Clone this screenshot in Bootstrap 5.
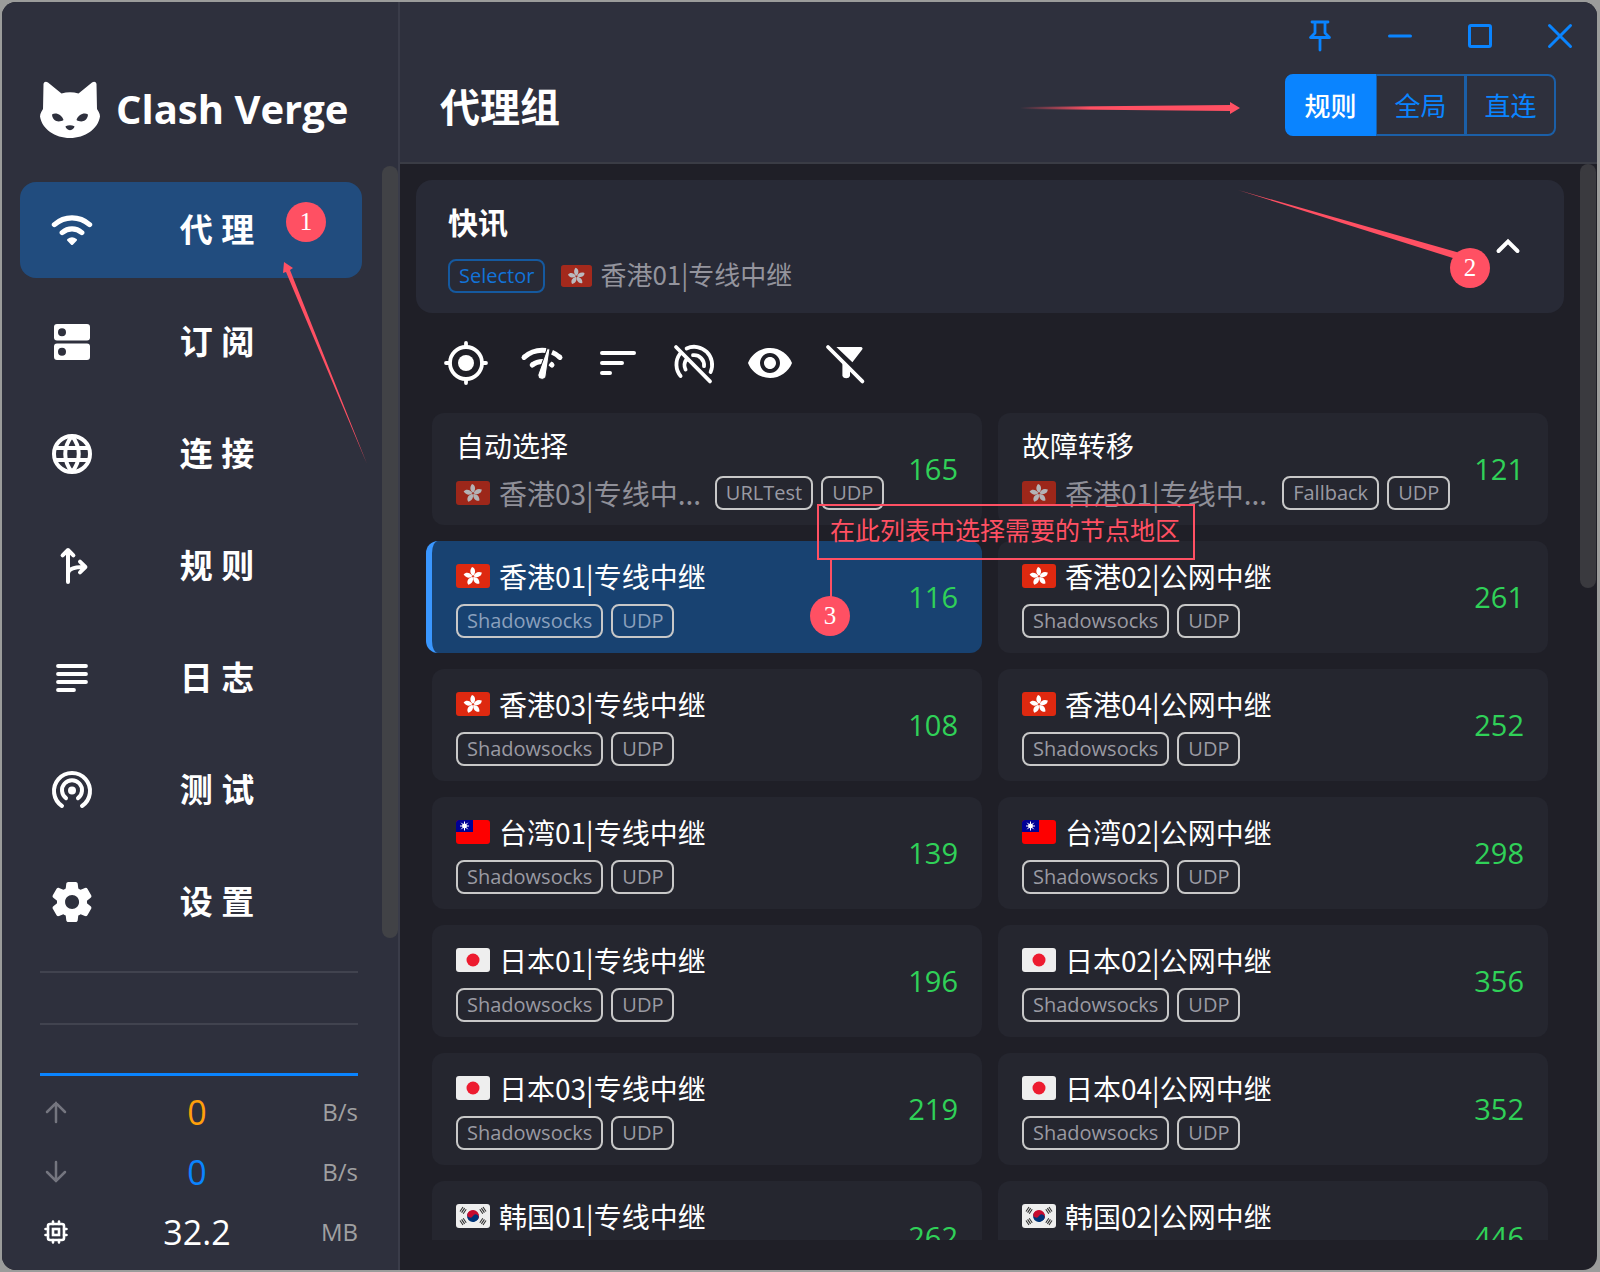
<!DOCTYPE html>
<html lang="zh-CN" data-bs-theme="dark">
<head>
<meta charset="utf-8">
<meta name="viewport" content="width=device-width, initial-scale=1">
<title>Clash Verge</title>
<link href="https://cdn.jsdelivr.net/npm/bootstrap@5.3.0/dist/css/bootstrap.min.css" rel="stylesheet">
<style>
:root{--cv-blue:#0a84ff;--cv-pin:#ff5063;--cv-latin:"Open Sans","Noto Sans CJK SC",sans-serif;--cv-cjk:"Noto Sans CJK SC","Open Sans",sans-serif}
body{background:#9b9c9b;font-family:var(--cv-latin);color:#fff;height:100vh;overflow:hidden}
svg{display:block;flex:none}
.shell{height:calc(100vh - 4px);margin:2px 3px 2px 2px;border-radius:14px;overflow:hidden;background:#1f1f27}
.side{width:398px;background:#2e303d;border-right:2px solid #3a3c49;flex:none}
.brand{height:164px;padding:78px 38px 0;gap:16px}
.brand-name{font-weight:700;font-size:40px;line-height:58px;white-space:nowrap}
.side-nav{gap:16px;padding:16px 36px 0 18px}
.side-nav .nav-link{height:96px;border-radius:16px;color:#fff;padding:0 0 0 28px;font-size:33px;font-weight:700;line-height:48px}
.side-nav .nav-link.active{background:#214c7e}
.side-nav .nav-link span{flex:1;text-align:center;padding-right:24px}
.thumb-side{top:164px;right:0;width:16px;height:772px;border-radius:8px;background:#414246}
.traffic{padding:0 40px 8px 38px}
.rule{height:2px;background:#41434f;margin-bottom:50px}
.graph-line{height:3px;background:var(--cv-blue);margin-top:-2px;margin-bottom:6px}
.stat-row{height:60px}
.stat-row>svg{width:32px}
.stat-val{flex:1;text-align:center;font-size:34px;line-height:44px;padding-left:24px}
.stat-val.up{color:#ff9f0a}.stat-val.down{color:var(--cv-blue)}
.stat-unit{width:60px;text-align:right;font-size:24px;line-height:32px;color:#a0a0a2}
.head{flex:none;height:162px;background:#2e303d;border-bottom:2px solid #3a3c45;padding:2px 41px 0 40px}
.win-btns{gap:32px;margin-right:-28px;margin-bottom:6px}
.win-btns .btn{padding:0;width:48px;height:64px;color:var(--cv-blue);border:0}
.head h1{font-size:40px;line-height:60px;font-weight:700;font-family:var(--cv-cjk)}
.mode .btn{height:62px;width:91px;padding:0;font-size:26px;line-height:36px;color:var(--cv-blue);border:2px solid #1b5fa8;border-radius:8px;font-family:var(--cv-cjk)}
.mode .btn.active{background:var(--cv-blue);border-color:var(--cv-blue);color:#fff;font-weight:500}
.mode .btn+.btn{margin-left:-1px}
.scroll-area{min-height:0;margin-bottom:30px;overflow:hidden}
.group{background:#282a36;border-radius:16px;margin:16px 33px 0 16px;padding:16px 32px 20px;height:133px;color:#fff}
.group h2{font-size:30px;line-height:52px;font-weight:700;font-family:var(--cv-cjk);margin:0 0 10px}
.chip{height:34px;border:2px solid #c8c8c8;border-radius:8px;padding:0 9px;font-size:20px;line-height:29px;color:#9a9aa3;white-space:nowrap}
.chip.sel{border-color:#15599f;color:#1273d8}
.sub{font-family:var(--cv-cjk);color:#94949d;font-size:26px;line-height:34px;padding-bottom:4px}
.tools{padding:26px 42px 26px;gap:28px}
.tools .btn{padding:0;border:0;width:48px;height:48px;color:#fff}
.nodes{display:grid;grid-template-columns:1fr 1fr;gap:16px;padding:0 49px 0 32px}
.node{height:112px;border-radius:12px;background:#25262f;padding:0 24px;min-width:0}
.node.active{background:#184271;border-left:6px solid #3a97ff;margin-left:-6px}
.node.active .chip{color:#8ba0bd}
.nm{font-family:var(--cv-cjk);font-size:28px;line-height:40px;gap:9px;white-space:nowrap}
.nm.grey{color:#8f8f98}
.nm.grey svg{opacity:.65}
.ms{font-size:29px;line-height:40px;color:#30d158;flex:none}
.thumb-main{top:162px;right:1px;width:16px;height:424px;border-radius:8px;background:#3a3a3f}
.notes{inset:0;pointer-events:none}
.pin-no{width:40px;height:40px;border-radius:50%;background:var(--cv-pin);font:25px/40px "Liberation Serif",serif;text-align:center;color:#fff}
.p1{left:286px;top:202px}.p2{left:1450px;top:248px}.p3{left:810px;top:596px}
.note-box{left:817px;top:504px;border:2px solid var(--cv-pin);color:var(--cv-pin);font:25px/37px var(--cv-cjk);padding:5px 13px 10px 11px;white-space:nowrap}
</style>
</head>
<body>
<svg width="0" height="0" class="position-absolute" aria-hidden="true">
<defs>
<g id="petal"><path d="M17 11.800C14 10 13.400 6 16 3C19.400 4 20 8.500 17.600 11.300Z" fill="#fff"/></g>
<symbol id="hk" viewBox="0 0 34 24"><rect width="34" height="24" rx="3" fill="#de2910"/><use href="#petal"/><use href="#petal" transform="rotate(72 17 12.500)"/><use href="#petal" transform="rotate(144 17 12.500)"/><use href="#petal" transform="rotate(216 17 12.500)"/><use href="#petal" transform="rotate(288 17 12.500)"/></symbol>
<symbol id="tw" viewBox="0 0 34 24"><rect width="34" height="24" rx="3" fill="#fe0000"/><path d="M3 0H17V12H0V3A3 3 0 0 1 3 0Z" fill="#000095"/><circle cx="8.500" cy="6" r="2.400" fill="#fff"/><path d="M8.500 1.500V10.500M4 6H13M5.300 2.800L11.700 9.200M11.700 2.800L5.300 9.200" stroke="#fff" stroke-width="1"/></symbol>
<symbol id="jp" viewBox="0 0 34 24"><rect width="34" height="24" rx="3" fill="#eee"/><circle cx="17" cy="12" r="6.500" fill="#ed1b2f"/></symbol>
<symbol id="kr" viewBox="0 0 34 24"><rect width="34" height="24" rx="3" fill="#eee"/><g transform="rotate(28 17 12)"><path d="M11 12A6 6 0 0 1 23 12Z" fill="#c60c30"/><path d="M11 12A6 6 0 0 0 23 12Z" fill="#003478"/><circle cx="14" cy="12" r="3" fill="#c60c30"/><circle cx="20" cy="12" r="3" fill="#003478"/></g><g stroke="#333" stroke-width="1.100"><path d="M4 7.500L7 3M5.600 8.600L8.600 4.100M7.200 9.700L10.200 5.200M30 7.500L27 3M28.400 8.600L25.400 4.100M26.800 9.700L23.800 5.200M4 16.500L7 21M5.600 15.400L8.600 19.900M7.200 14.300L10.200 18.800M30 16.500L27 21M28.400 15.400L25.400 19.900M26.800 14.300L23.800 18.800"/></g></symbol>
</defs>
</svg>

<div class="shell d-flex position-relative">
  <aside class="side d-flex flex-column position-relative">
    <div class="brand d-flex">
      <svg width="60" height="60" viewBox="0 0 60 60"><path fill="#fff" d="M3.500 4C4 1.500 6 1 8 2.500L21.500 13.500Q30 11 38.500 13.500L52 2.500C54 1 56 1.500 56.500 4L57 29C58 31 60 33 60 36.500C58 49 45 58 30 58S2 49 0 36.500C0 33 2 31 3 29Z"/><path fill="#2e303d" d="M12 34.500C16 32 22 35 23.500 40C19 43 12.500 41.500 12 34.500ZM48 34.500C44 32 38 35 36.500 40C41 43 47.500 41.500 48 34.500ZM25.500 46.200Q30 44.500 34.500 46.200C34.500 48 32.500 50 30 50.200C27.500 50 25.500 48 25.500 46.200Z"/></svg>
      <div class="brand-name">Clash Verge</div>
    </div>
    <nav class="side-nav nav flex-column flex-nowrap">
      <a href="#" class="nav-link active d-flex align-items-center"><svg width="48" height="48" viewBox="0 0 24 24" fill="none" stroke="#fff" stroke-width="2.600" stroke-linecap="round"><path d="M3.200 9.300C8.300 4.800 15.700 4.800 20.800 9.300M7.100 13.300C10 10.800 14 10.800 16.900 13.300"/><path d="M12 18.900L10.100 17C11.200 16.100 12.800 16.100 13.900 17Z" fill="#fff" stroke-width="1.200" stroke-linejoin="round"/></svg><span>代 理</span></a>
      <a href="#" class="nav-link d-flex align-items-center"><svg width="48" height="48" viewBox="0 0 24 24"><path fill="#fff" fill-rule="evenodd" d="M4.500 3H19.500A1.500 1.500 0 0 1 21 4.500V9.700A1.500 1.500 0 0 1 19.500 11.200H4.500A1.500 1.500 0 0 1 3 9.700V4.500A1.500 1.500 0 0 1 4.500 3ZM7 5.100A2 2 0 1 0 7 9.100A2 2 0 1 0 7 5.100ZM4.500 12.800H19.500A1.500 1.500 0 0 1 21 14.300V19.500A1.500 1.500 0 0 1 19.500 21H4.500A1.500 1.500 0 0 1 3 19.500V14.300A1.500 1.500 0 0 1 4.500 12.800ZM7 14.900A2 2 0 1 0 7 18.900A2 2 0 1 0 7 14.900Z"/></svg><span>订 阅</span></a>
      <a href="#" class="nav-link d-flex align-items-center"><svg width="48" height="48" viewBox="0 0 24 24" fill="none" stroke="#fff" stroke-width="2"><circle cx="12" cy="12" r="9"/><path d="M3.500 9H20.500M3.500 15H20.500M12 3C7.500 8.500 7.500 15.500 12 21M12 3C16.500 8.500 16.500 15.500 12 21"/></svg><span>连 接</span></a>
      <a href="#" class="nav-link d-flex align-items-center"><svg width="48" height="48" viewBox="0 0 24 24" fill="none" stroke="#fff" stroke-width="2" stroke-linecap="round" stroke-linejoin="round"><path d="M10 20V5M7.300 6.700L10 4L12.700 6.700M10 16C10 13.500 12.500 12.500 18 12.500M16 9.800L18.700 12.500L16 15.200"/></svg><span>规 则</span></a>
      <a href="#" class="nav-link d-flex align-items-center"><svg width="48" height="48" viewBox="0 0 24 24" fill="none" stroke="#fff" stroke-width="1.900" stroke-linecap="round"><path d="M5 6H19M5 10H19M5 14H19M5 18H13"/></svg><span>日 志</span></a>
      <a href="#" class="nav-link d-flex align-items-center"><svg width="48" height="48" viewBox="0 0 24 24" fill="none" stroke="#fff" stroke-width="2" stroke-linecap="round"><path d="M7 20A9 9 0 1 1 17 20M9 16.100A5 5 0 1 1 15 16.100"/><circle cx="12" cy="12.200" r="2" fill="#fff" stroke="none"/></svg><span>测 试</span></a>
      <a href="#" class="nav-link d-flex align-items-center"><svg width="48" height="48" viewBox="0 0 24 24" fill="#fff"><path d="M19.500 12c0-.23-.01-.45-.03-.68l1.860-1.410c.4-.3.510-.86.260-1.300l-1.870-3.230a.987.987 0 0 0-1.250-.42l-2.150.91c-.37-.26-.76-.49-1.170-.68l-.29-2.310c-.06-.5-.49-.88-.99-.88h-3.730c-.51 0-.94.38-1 .88l-.29 2.310c-.41.190-.8.420-1.170.680l-2.150-.91c-.46-.2-1-.02-1.250.420L2.410 8.620c-.25.440-.14.990.260 1.300l1.860 1.410a7.343 7.343 0 0 0 0 1.350l-1.860 1.410c-.4.300-.510.860-.260 1.300l1.870 3.230c.25.440.790.620 1.250.420l2.150-.91c.37.260.760.490 1.170.680l.29 2.310c.06.500.490.880.990.880h3.730c.5 0 .930-.38.990-.88l.29-2.310c.41-.19.800-.42 1.170-.68l2.150.91c.46.200 1 .02 1.250-.42l1.870-3.230c.25-.44.140-.99-.26-1.300l-1.860-1.410c.03-.23.040-.45.040-.68zm-7.460 3.500c-1.930 0-3.500-1.570-3.500-3.500s1.570-3.500 3.500-3.500 3.500 1.570 3.500 3.500-1.570 3.500-3.500 3.500z"/></svg><span>设 置</span></a>
    </nav>
    <div class="thumb-side position-absolute"></div>
    <div class="traffic mt-auto">
      <div class="rule"></div>
      <div class="rule"></div>
      <div class="graph-line"></div>
      <div class="stat-row d-flex align-items-center"><svg width="32" height="32" viewBox="0 0 32 32" fill="none" stroke="#74757f" stroke-width="2.500" stroke-linecap="round"><path d="M16 26V7M7 16L16 7L25 16"/></svg><div class="stat-val up">0</div><div class="stat-unit">B/s</div></div>
      <div class="stat-row d-flex align-items-center"><svg width="32" height="32" viewBox="0 0 32 32" fill="none" stroke="#74757f" stroke-width="2.500" stroke-linecap="round"><path d="M16 6V25M7 16L16 25L25 16"/></svg><div class="stat-val down">0</div><div class="stat-unit">B/s</div></div>
      <div class="stat-row d-flex align-items-center"><svg width="32" height="32" viewBox="0 0 32 32" fill="none" stroke="#fff" stroke-width="2.600" stroke-linecap="round"><rect x="8" y="8" width="16" height="16" rx="2"/><rect x="13" y="13" width="6" height="6"/><path d="M13 8V5.500M19 8V5.500M13 26.500V24M19 26.500V24M8 13H5.500M8 19H5.500M26.500 13H24M26.500 19H24"/></svg><div class="stat-val">32.2</div><div class="stat-unit">MB</div></div>
    </div>
  </aside>

  <main class="flex-grow-1 d-flex flex-column">
    <header class="head">
      <div class="win-btns d-flex justify-content-end">
        <button class="btn d-flex justify-content-center align-items-center" aria-label="置顶"><svg width="32" height="34" viewBox="0 0 32 34" fill="none" stroke="currentColor" stroke-width="2.800" stroke-linecap="round" stroke-linejoin="round"><path d="M8 3H24M11 3V14L6.500 18.500H25.500L21 14V3M16 19V31"/></svg></button>
        <button class="btn d-flex justify-content-center align-items-center" aria-label="最小化"><svg width="32" height="32" viewBox="0 0 32 32" stroke="currentColor" stroke-width="3" stroke-linecap="round"><path d="M5.500 16H26.500"/></svg></button>
        <button class="btn d-flex justify-content-center align-items-center" aria-label="最大化"><svg width="32" height="32" viewBox="0 0 32 32" fill="none" stroke="currentColor" stroke-width="3"><rect x="5.500" y="5.500" width="21" height="21" rx="1.500"/></svg></button>
        <button class="btn d-flex justify-content-center align-items-center" aria-label="关闭"><svg width="32" height="32" viewBox="0 0 32 32" stroke="currentColor" stroke-width="3" stroke-linecap="round"><path d="M5.500 5.500L26.500 26.500M26.500 5.500L5.500 26.500"/></svg></button>
      </div>
      <div class="d-flex justify-content-between align-items-center">
        <h1 class="m-0">代理组</h1>
        <div class="mode btn-group" role="group"><button class="btn active">规则</button><button class="btn">全局</button><button class="btn">直连</button></div>
      </div>
    </header>
    <div class="scroll-area flex-grow-1">
      <section class="group d-flex align-items-center justify-content-between">
        <div>
          <h2>快讯</h2>
          <div class="d-flex align-items-center"><span class="chip sel">Selector</span><svg class="ms-3 me-2" width="31" height="22" opacity=".68"><use href="#hk" width="31" height="22"/></svg><span class="sub">香港01|专线中继</span></div>
        </div>
        <svg width="48" height="48" viewBox="0 0 48 48" fill="none" stroke="#fff" stroke-width="4" stroke-linecap="round"><path d="M14.500 30L24 20.500L33.500 30"/></svg>
      </section>
      <div class="tools d-flex">
        <button class="btn" aria-label="定位"><svg width="48" height="48" viewBox="0 0 24 24" fill="none" stroke="currentColor" stroke-width="1.900" stroke-linecap="round"><circle cx="12" cy="12" r="8"/><circle cx="12" cy="12" r="4" fill="currentColor" stroke="none"/><path d="M12 2V3.500M12 20.500V22M2 12H3.500M20.500 12H22"/></svg></button>
        <button class="btn" aria-label="测速"><svg width="48" height="48" viewBox="0 0 24 24" fill="none" stroke="currentColor" stroke-width="2.500"><path d="M3 9.200C6.200 6.400 10 5.300 14 5.800M17 6.600C18.500 7.200 19.900 8.100 21 9.200M7.100 13C8.700 11.700 10.600 11.100 12.900 11.200M16 12.200L17 13"/><path d="M3.100 9.100L3 9.200M20.900 9.100L21 9.200M7.200 12.900L7.100 13M16.900 12.900L17 13" stroke-linecap="round"/><path d="M14.600 4.800L10 17.600A2 2 0 1 0 14 18.600L16 5Z" fill="currentColor" stroke="#1f1f27" stroke-width=".5"/></svg></button>
        <button class="btn" aria-label="排序"><svg width="48" height="48" viewBox="0 0 24 24" stroke="currentColor" stroke-width="2" stroke-linecap="round"><path d="M4 7H20M4 12H14M4 17H8"/></svg></button>
        <button class="btn" aria-label="测试地址"><svg width="48" height="48" viewBox="0 0 24 24" fill="none" stroke="currentColor" stroke-width="1.900" stroke-linecap="round"><path d="M8.300 4.700A9 9 0 0 1 20.300 16.500M4.900 7.500A9 9 0 0 0 5.300 18.500M11.500 8.100A5 5 0 0 1 17 13.600M8.200 10.200A5 5 0 0 0 7.800 15.300M3 4L20 21.200"/><path d="M10.500 11.300L13.800 14.600Q10.600 14.500 10.500 11.300Z" fill="currentColor" stroke="none"/></svg></button>
        <button class="btn" aria-label="显示"><svg width="48" height="48" viewBox="0 0 24 24" fill="currentColor"><path d="M12 4.500C7 4.500 2.730 7.610 1 12c1.730 4.390 6 7.500 11 7.500s9.270-3.110 11-7.500c-1.730-4.390-6-7.500-11-7.500zM12 17c-2.760 0-5-2.240-5-5s2.240-5 5-5 5 2.240 5 5-2.240 5-5 5zm0-8c-1.660 0-3 1.340-3 3s1.340 3 3 3 3-1.340 3-3-1.340-3-3-3z"/></svg></button>
        <button class="btn" aria-label="过滤"><svg width="48" height="48" viewBox="0 0 24 24" fill="currentColor"><path d="M7.200 4H19.500A.8.800 0 0 1 20.100 5.300L15.200 11.600ZM10.200 12L14 15.800V18.500A2 1.700 0 0 1 10.200 18.500Z"/><path d="M3 4L20.200 21.200" stroke="currentColor" stroke-width="1.900" stroke-linecap="round"/></svg></button>
      </div>
      <div class="nodes" id="nodes"></div>
    </div>
  </main>
  <div class="thumb-main position-absolute"></div>
</div>

<div class="notes position-absolute">
  <svg class="position-absolute" width="1600" height="1272" viewBox="0 0 1600 1272" fill="#ff5063">
    <defs><linearGradient id="fade" gradientUnits="userSpaceOnUse" x1="1020" y1="0" x2="1090" y2="0"><stop offset="0" stop-color="#ff5063" stop-opacity="0"/><stop offset="1" stop-color="#ff5063"/></linearGradient></defs>
    <path d="M284 262L293 268L290 270L367 464L286 272L283 273Z"/>
    <path d="M1020 107L1230 105V102L1240 108L1230 114V111L1020 109Z" fill="url(#fade)"/>
    <path d="M1238 190L1460 253L1456 259Z"/>
    <path d="M830 559h2v38h-2z"/>
  </svg>
  <div class="note-box position-absolute">在此列表中选择需要的节点地区</div>
  <div class="pin-no p1 position-absolute">1</div>
  <div class="pin-no p2 position-absolute">2</div>
  <div class="pin-no p3 position-absolute">3</div>
</div>

<script>
const flag = c => `<svg width="34" height="24"><use href="#${c}" width="34" height="24"/></svg>`;
const chip = t => `<span class="chip">${t}</span>`;
const groups = [["自动选择","香港03|专线中...","URLTest",165],["故障转移","香港01|专线中...","Fallback",121]];
const nodes = [["hk","香港01|专线中继",116],["hk","香港02|公网中继",261],["hk","香港03|专线中继",108],["hk","香港04|公网中继",252],
["tw","台湾01|专线中继",139],["tw","台湾02|公网中继",298],["jp","日本01|专线中继",196],["jp","日本02|公网中继",356],
["jp","日本03|专线中继",219],["jp","日本04|公网中继",352],["kr","韩国01|专线中继",262],["kr","韩国02|公网中继",446]];
document.getElementById("nodes").innerHTML =
 groups.map(g => `<div class="node d-flex align-items-center"><div class="flex-grow-1"><div class="nm pb-2">${g[0]}</div>
 <div class="d-flex align-items-center gap-2 me-4"><div class="nm grey d-flex align-items-center flex-grow-1">${flag("hk")}<span>${g[1]}</span></div>${chip(g[2])}${chip("UDP")}</div></div><div class="ms">${g[3]}</div></div>`).join("") +
 nodes.map((n,i) => `<div class="node d-flex align-items-center justify-content-between${i?"":" active"}"><div><div class="nm d-flex align-items-center pb-1">${flag(n[0])}<span>${n[1]}</span></div>
 <div class="d-flex gap-2 pt-1">${chip("Shadowsocks")}${chip("UDP")}</div></div><div class="ms">${n[2]}</div></div>`).join("");
</script>
<script src="https://cdn.jsdelivr.net/npm/bootstrap@5.3.0/dist/js/bootstrap.bundle.min.js"></script>
</body>
</html>
